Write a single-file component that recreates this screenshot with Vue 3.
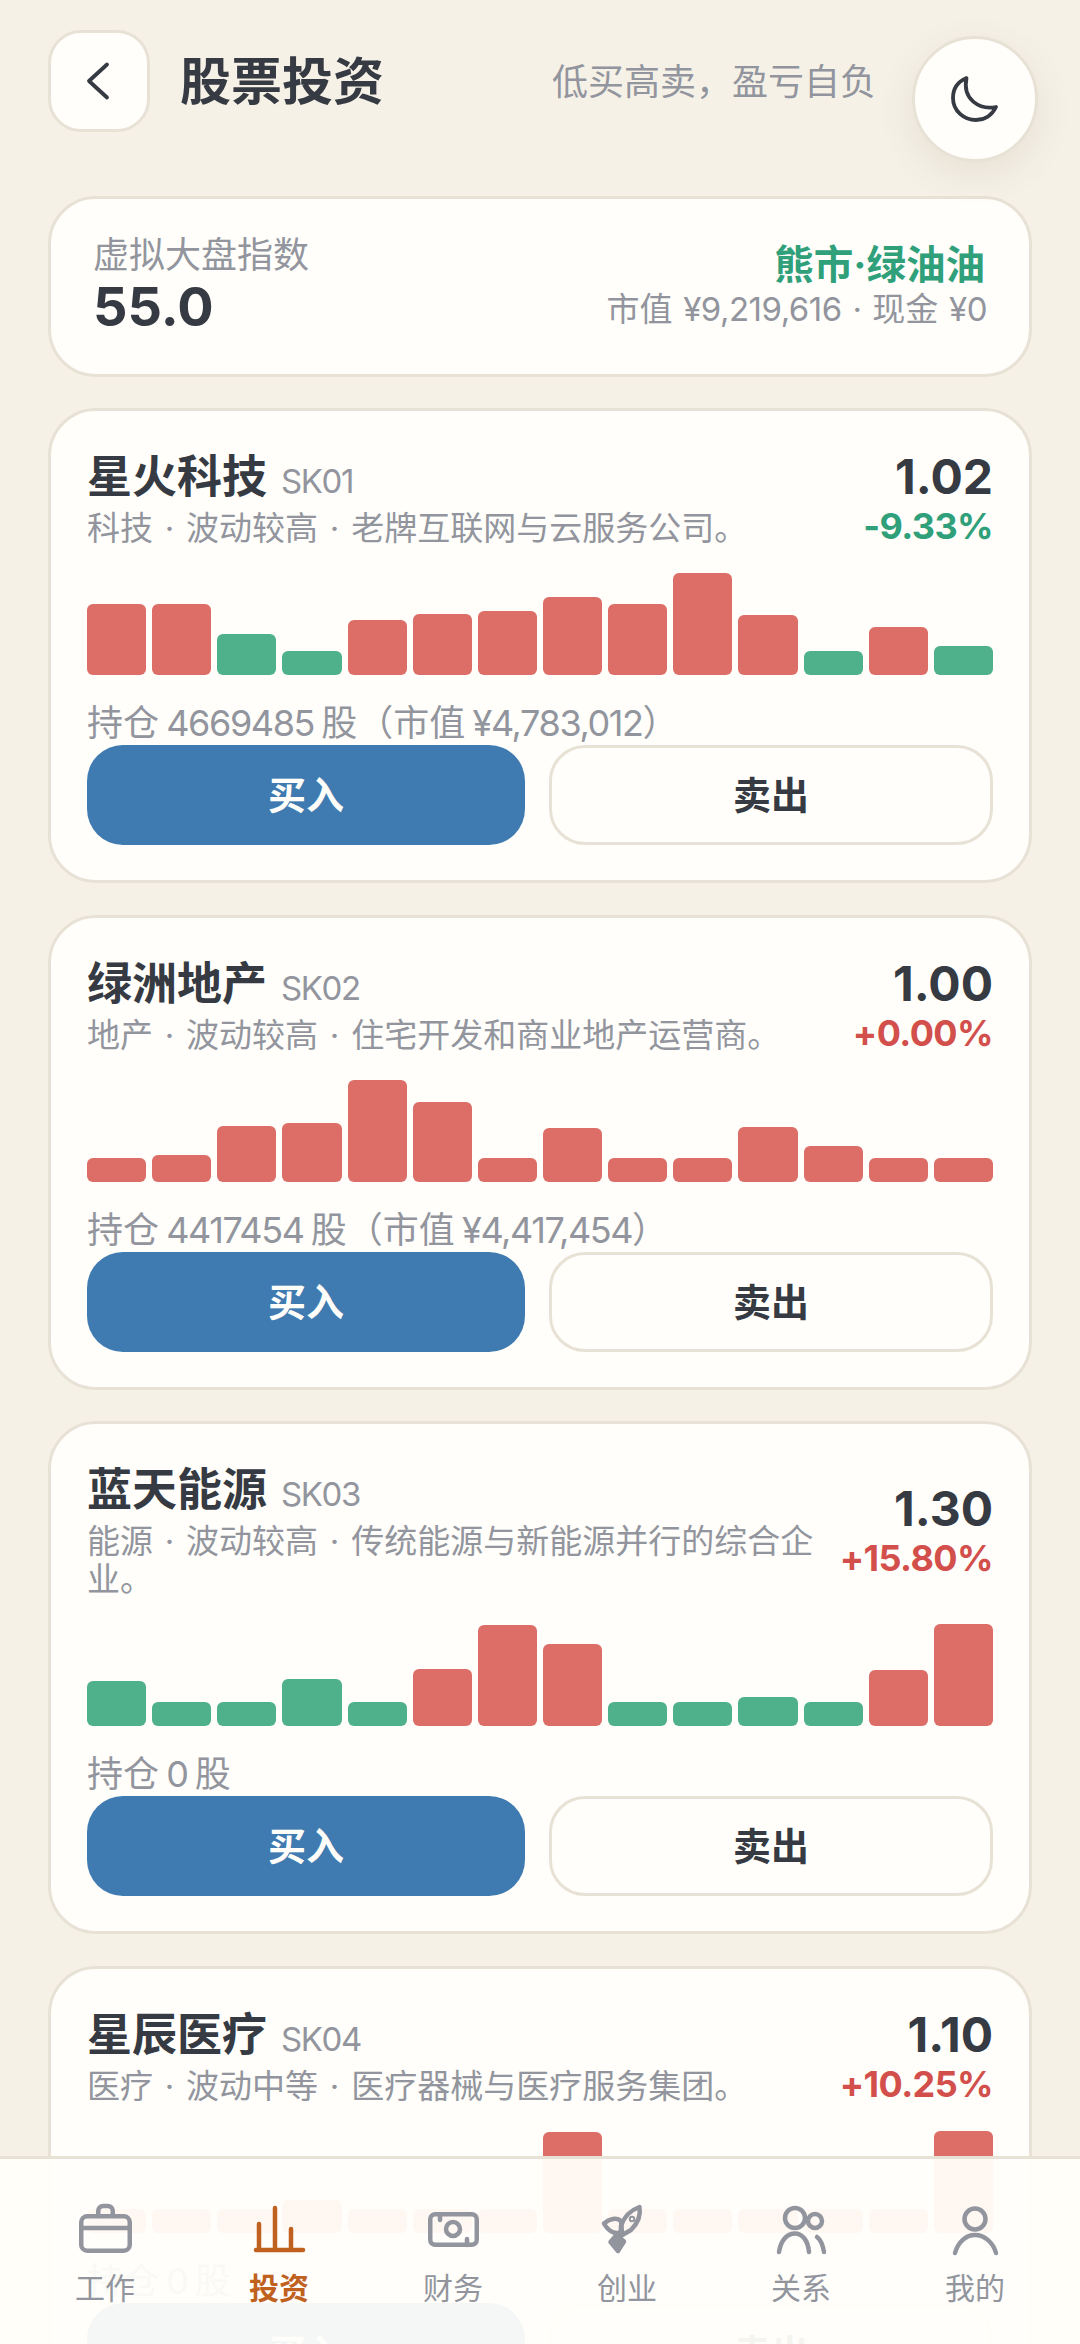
<template>
  <div class="page">
    <header class="head">
      <button class="back">
        <svg viewBox="0 0 60 60" width="60" height="60"><path d="M38 13.5L20 30l18 16.5" class="ic-dark" /></svg>
      </button>
      <h1 class="title">股票投资</h1>
      <span class="sub">低买高卖，盈亏自负</span>
    </header>

    <section class="panel summary">
      <div>
        <div class="sum-label">虚拟大盘指数</div>
        <div class="sum-value">55.0</div>
      </div>
      <div class="sum-right">
        <div class="sum-state">熊市·绿油油</div>
        <div class="sum-meta">
          <span v-for="(r, i) in runs(meta)" :key="i" :class="{ lat: i % 2 }">{{ r }}</span>
        </div>
      </div>
    </section>

    <section v-for="s in stocks" :key="s.code" class="panel stock">
      <div class="stock-top">
        <div class="stock-info">
          <div class="name-row">
            <span class="name">{{ s.name }}</span>
            <span class="code">{{ s.code }}</span>
          </div>
          <div class="desc">{{ s.desc }}</div>
        </div>
        <div class="quote">
          <div class="price">{{ s.price }}</div>
          <div class="change" :class="s.up ? 'up' : 'down'">{{ s.change }}</div>
        </div>
      </div>
      <div class="bars">
        <div
          v-for="(b, i) in s.bars"
          :key="i"
          class="bar"
          :class="s.colors[i] === 'g' ? 'bar-g' : 'bar-r'"
          :style="{ height: b + 'px' }"
        ></div>
      </div>
      <div class="hold">
        <span v-for="(r, i) in runs(s.hold)" :key="i" :class="{ lat: i % 2 }">{{ r }}</span>
      </div>
      <div class="actions">
        <button class="btn buy">买入</button>
        <button class="btn sell">卖出</button>
      </div>
    </section>

    <button class="moon">
      <svg viewBox="45 49 60 60" width="60" height="60">
        <path d="M66.5 58C57 62 53 70 53 78c0 13 11 22 23 22 9 0 16-5 20-13-16 3-34-7-29.500-29z" class="ic-dark" />
      </svg>
    </button>

    <nav class="tabbar">
      <div v-for="t in tabs" :key="t.label" class="tab" :class="{ active: t.active }">
        <svg viewBox="0 0 60 60" width="60" height="60" class="tab-ic">
          <template v-if="t.icon === 'work'">
            <rect x="6.250" y="17.250" width="48.500" height="34.500" rx="6" />
            <path d="M6.250 29h48.500M23.250 17v-5a5 5 0 0 1 5-5h4.500a5 5 0 0 1 5 5v5" />
          </template>
          <template v-else-if="t.icon === 'invest'">
            <path d="M7 51h47M10 51V25M26 51V9M42 51V30" />
          </template>
          <template v-else-if="t.icon === 'money'">
            <rect x="7.250" y="15.250" width="46.500" height="30.500" rx="5" />
            <circle cx="30" cy="30" r="7" />
            <path d="M17 15.500V21M44 46v-6" />
          </template>
          <template v-else-if="t.icon === 'rocket'">
            <path d="M42.500 8C34 11 27 18 24 27l-.5 10L34 31c6-6 10-14 8.500-23z" />
            <path d="M7 24.500c5-4.500 13-6.500 17-2.500l1 11c-7 3-14-1-18-8.500z" />
            <path d="M13.500 43l6-7 7.500 6.500-6 9.500z" class="solid" />
            <circle cx="35" cy="20" r="1" />
          </template>
          <template v-else-if="t.icon === 'people'">
            <circle cx="24" cy="19" r="10" />
            <circle cx="44" cy="22" r="7" />
            <path d="M8 53c2-13 9-18.500 16-18.500S37 41 38 53M46 38c4 3 6 9 7 15" />
          </template>
          <template v-else>
            <circle cx="30" cy="20" r="10.500" />
            <path d="M10 54c3-11 11-18 20-18s18 7 21 18" />
          </template>
        </svg>
        <span class="tab-label">{{ t.label }}</span>
      </div>
    </nav>
  </div>
</template>

<script setup>
const meta = '市值 ¥9,219,616 · 现金 ¥0'

const stocks = [
  {
    name: '星火科技', code: 'SK01', desc: '科技 · 波动较高 · 老牌互联网与云服务公司。',
    price: '1.02', change: '-9.33%', up: false,
    bars: [71, 71, 41, 24, 55, 61, 64, 78, 71, 102, 60, 24, 48, 29],
    colors: 'rrggrrrrrrrgrg',
    hold: '持仓 4669485 股（市值 ¥4,783,012）',
  },
  {
    name: '绿洲地产', code: 'SK02', desc: '地产 · 波动较高 · 住宅开发和商业地产运营商。',
    price: '1.00', change: '+0.00%', up: true,
    bars: [24, 27, 56, 59, 102, 80, 24, 54, 24, 24, 55, 36, 24, 24],
    colors: 'rrrrrrrrrrrrrr',
    hold: '持仓 4417454 股（市值 ¥4,417,454）',
  },
  {
    name: '蓝天能源', code: 'SK03', desc: '能源 · 波动较高 · 传统能源与新能源并行的综合企业。',
    price: '1.30', change: '+15.80%', up: true,
    bars: [45, 24, 24, 47, 24, 57, 101, 82, 24, 24, 29, 24, 56, 102],
    colors: 'gggggrrrggggrr',
    hold: '持仓 0 股',
  },
  {
    name: '星辰医疗', code: 'SK04', desc: '医疗 · 波动中等 · 医疗器械与医疗服务集团。',
    price: '1.10', change: '+10.25%', up: true,
    bars: [24, 24, 24, 33, 24, 24, 24, 101, 24, 24, 24, 24, 24, 102],
    colors: 'rrrrrrrrrrrrrr',
    hold: '持仓 0 股',
  },
]

const tabs = [
  { label: '工作', icon: 'work' },
  { label: '投资', icon: 'invest', active: true },
  { label: '财务', icon: 'money' },
  { label: '创业', icon: 'rocket' },
  { label: '关系', icon: 'people' },
  { label: '我的', icon: 'me' },
]

// odd entries are the latin runs, they get tighter tracking than the CJK text
function runs(text) {
  return text.split(/([ -~¥·]+)/)
}
</script>

<style>
html, body { margin: 0; background: #f5f1e7; overflow: hidden; }
</style>

<style scoped>
.page {
  position: relative;
  width: 1080px;
  height: 2344px;
  overflow: hidden;
  padding: 30px 48px 0;
  box-sizing: border-box;
  background: #f5f1e7;
  color: #363a42;
  font-family: Inter, "Noto Sans CJK SC", sans-serif;
}
button { font-family: inherit; padding: 0; cursor: pointer; }
svg { display: block; }
.ic-dark { fill: none; stroke: #363a42; stroke-width: 3.800; stroke-linecap: round; stroke-linejoin: round; }

.head { display: flex; align-items: center; height: 102px; padding-right: 156px; margin-bottom: 64px; }
.back {
  width: 102px; height: 102px; box-sizing: border-box;
  border: 3px solid #e8e2d6; border-radius: 33px; background: #fffefa;
  display: flex; align-items: center; justify-content: center;
}
.title { margin: 0 0 0 30px; padding-top: 2px; font-size: 51px; font-weight: 700; line-height: 60px; }
.sub { margin-left: auto; padding-bottom: 5px; font-size: 36px; color: #92959d; }

.moon {
  position: absolute; top: 36px; right: 42px;
  width: 126px; height: 126px; box-sizing: border-box;
  border: 3px solid #e8e2d6; border-radius: 50%; background: #fffefa;
  box-shadow: 0 12px 36px rgba(120, 90, 50, 0.1);
  display: flex; align-items: center; justify-content: center;
}

.panel { border: 3px solid #e8e2d6; border-radius: 48px; background: #fffefa; box-sizing: border-box; }
.summary {
  display: flex; justify-content: space-between; align-items: center;
  height: 181px; padding: 0 42px 3px; margin-bottom: 31px;
}
.sum-label { font-size: 36px; line-height: 44px; color: #92959d; }
.sum-value { font-size: 54px; line-height: 60px; font-weight: 700; }
.sum-right { text-align: right; }
.sum-state { margin-right: 2px; font-size: 39.500px; line-height: 48px; font-weight: 700; color: #2fa07a; }
.sum-meta { font-size: 33px; line-height: 40px; color: #92959d; }
.sum-meta .lat { letter-spacing: -0.500px; word-spacing: 2px; }

.stock { padding: 36px 36px 35px; margin-bottom: 31.500px; }
.stock-top { display: flex; align-items: center; gap: 18px; margin-bottom: 26px; }
.stock-info { flex: 1; min-width: 0; }
.name-row { display: flex; align-items: baseline; gap: 14px; height: 60px; line-height: 60px; }
.name { font-size: 45px; font-weight: 700; }
.code { font-size: 33px; color: #92959d; letter-spacing: -1.400px; }
.desc { font-size: 33px; line-height: 38px; margin-top: 2px; color: #92959d; word-spacing: 2.500px; }
.quote { text-align: right; flex-shrink: 0; }
.price { font-size: 48px; line-height: 58px; font-weight: 700; }
.change { font-size: 36px; line-height: 40px; font-weight: 700; letter-spacing: -0.600px; }
.change.up { color: #d24f4b; }
.change.down { color: #2fa07a; }

.bars { display: flex; align-items: flex-end; gap: 6px; height: 102px; }
.bar { flex: 1; border-radius: 6px; }
.bar-r { background: #dd6e67; }
.bar-g { background: #4fb08c; }

.hold { margin-top: 26px; font-size: 36px; line-height: 44px; color: #92959d; }
.hold .lat { letter-spacing: -1.400px; word-spacing: -1.500px; }
.actions { display: flex; gap: 24px; }
.btn {
  flex: 1; height: 100px; box-sizing: border-box; border: none; border-radius: 36px;
  padding-bottom: 5px; font-size: 38px; font-weight: 700;
}
.buy { background: #3f7bb0; color: #fffefa; }
.sell { background: #fffefa; color: #363a42; border: 3px solid #e8e2d6; }

.tabbar {
  position: absolute; left: 0; right: 0; bottom: 0;
  height: 188px; box-sizing: border-box;
  padding: 40px 18px 0;
  display: flex;
  border-top: 3px solid #e8e2d6;
  background: rgba(255, 254, 250, 0.95);
}
.tab { flex: 1; display: flex; flex-direction: column; align-items: center; color: #92959d; }
.tab-ic { fill: none; stroke: currentColor; stroke-width: 4.500; stroke-linecap: round; stroke-linejoin: round; }
.tab-ic .solid { fill: currentColor; }
.tab-label { margin-top: 11px; font-size: 30px; line-height: 36px; }
.tab.active { color: #c0611f; }
.tab.active .tab-label { font-weight: 700; }
</style>
